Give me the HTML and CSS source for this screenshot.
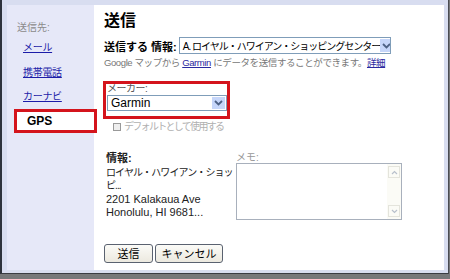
FILE: index.html
```html
<!DOCTYPE html>
<html lang="ja">
<head>
    <meta charset="UTF-8">
    <title>送信</title>
    <link rel="stylesheet" href="styles.css">
</head>
<body>
    <div class="frame">
        <div class="dialog">
            <div class="side">
                <div class="side-label">送信先:</div>
                <a class="side-link" href="#">メール</a>
                <a class="side-link" href="#">携帯電話</a>
                <a class="side-link" href="#">カーナビ</a>
                <div class="side-sel">GPS</div>
            </div>
            <div class="main">
                <h1>送信</h1>
                <div class="info-line">
                    <span class="strong">送信する 情報:</span>
                    <div class="dropdown wide">
                        <span class="jp">A. ロイヤル・ハワイアン・ショッピングセンター</span>
                        <span class="arrow"><svg width="9" height="6" viewBox="0 0 9 6"><path d="M1 1 L4.5 4.5 L8 1" fill="none" stroke="#4d6185" stroke-width="1.8"/></svg></span>
                    </div>
                </div>
                <p class="hint">Google マップから <a href="#">Garmin</a> にデータを送信することができます。<a href="#">詳細</a></p>

                <div class="maker">
                    <div class="maker-label">メーカー:</div>
                    <div class="dropdown maker-select">
                        <span>Garmin</span>
                        <span class="arrow"><svg width="9" height="6" viewBox="0 0 9 6"><path d="M1 1 L4.5 4.5 L8 1" fill="none" stroke="#4d6185" stroke-width="1.8"/></svg></span>
                    </div>
                </div>
                <div class="check"><span class="box"></span>デフォルトとして使用する</div>

                <div class="details">
                    <div class="info">
                        <div class="strong">情報:</div>
                        <div class="jp">ロイヤル・ハワイアン・ショッ</div>
                        <div class="jp">ピ...</div>
                        <div>2201 Kalakaua Ave</div>
                        <div>Honolulu, HI 9681...</div>
                    </div>
                    <div class="memo">
                        <div class="memo-label">メモ:</div>
                        <div class="memo-box">
                            <div class="scroll">
                                <span class="sbtn"><svg width="7" height="5" viewBox="0 0 7 5"><path d="M1 4 L3.5 1.5 L6 4" fill="none" stroke="#b8c0cc" stroke-width="1.2"/></svg></span>
                                <span class="sbtn"><svg width="7" height="5" viewBox="0 0 7 5"><path d="M1 1 L3.5 3.5 L6 1" fill="none" stroke="#b8c0cc" stroke-width="1.2"/></svg></span>
                            </div>
                        </div>
                    </div>
                </div>

                <div class="buttons">
                    <button>送信</button>
                    <button class="cancel">キャンセル</button>
                </div>
            </div>
        </div>
    </div>
</body>
</html>
```

FILE: styles.css
```css
body {
    margin: 0;
    background-color: #77787a;
    font-family: 'Liberation Sans', 'Noto Sans CJK JP', sans-serif;
    color: #000;
    width: 450px;
    height: 279px;
    overflow: hidden;
}
.frame {
    width: 437px;
    height: 265px;
    background-color: #d8ddf0;
    border-left: 2px solid #2e323c;
    border-right: 1px solid #4a4c52;
    border-bottom: 1px solid #3a3c42;
    padding: 5px 4px 3px 5px;
}
.dialog {
    display: flex;
    height: 100%;
}
.side {
    width: 87px;
    background-color: #e6e8f8;
    padding-top: 16px;
    display: flex;
    flex-direction: column;
    align-items: flex-start;
}
.side-label {
    font-size: 10px;
    color: #8a8a8a;
    margin-left: 10px;
    margin-bottom: 6px;
    line-height: 14px;
}
.side-link {
    font-size: 10px;
    color: #1c1ca8;
    margin-left: 16px;
    margin-bottom: 10.5px;
    line-height: 14px;
    letter-spacing: -0.3px;
}
.side-sel {
    position: relative;
    z-index: 1;
    width: 67px;
    height: 18px;
    margin-left: 7px;
    margin-right: -3px;
    margin-top: -6px;
    background-color: #fff;
    border: 3px solid #d4141c;
    font-size: 12px;
    font-weight: bold;
    line-height: 18px;
    padding-left: 10px;
    box-sizing: content-box;
}
.main {
    flex: 1;
    background-color: #fff;
    padding: 4px 0 0 10px;
}
h1 {
    margin: 0 0 4px 0;
    font-size: 16px;
    font-weight: bold;
    line-height: 24px;
}
.strong {
    font-weight: bold;
    font-size: 11px;
}
.jp {
    letter-spacing: -1px;
}
.info-line {
    display: flex;
    align-items: center;
    gap: 2px;
}
.dropdown {
    box-sizing: border-box;
    display: flex;
    align-items: center;
    justify-content: space-between;
    border: 1px solid #7f9db9;
    height: 17px;
    font-size: 11px;
    padding-left: 3px;
    background-color: #fff;
    white-space: nowrap;
    overflow: hidden;
}
.dropdown.wide {
    width: 212px;
    font-size: 10px;
}
.arrow {
    flex: none;
    width: 13px;
    height: 13px;
    margin-right: 1px;
    background-color: #c6d6fa;
    display: flex;
    align-items: center;
    justify-content: center;
}
.hint {
    margin: 2px 0 0 0;
    font-size: 9.5px;
    color: #777;
    line-height: 14px;
    letter-spacing: -0.4px;
    white-space: nowrap;
}
.hint a {
    color: #2a2aa0;
}
.maker {
    margin-top: 11px;
    margin-left: -1px;
    width: 121px;
    border: 3px solid #d4141c;
    padding: 0 0 5px 0;
}
.maker-label {
    font-size: 10px;
    color: #555;
    line-height: 10px;
    margin-left: 1px;
    letter-spacing: -0.5px;
}
.maker-select {
    width: 120px;
    height: 16px;
    font-size: 12px;
    margin: 1px 0 0 1px;
}
.maker-select .arrow {
    height: 12px;
}
.check {
    display: flex;
    align-items: center;
    gap: 3px;
    font-size: 10px;
    letter-spacing: -1.7px;
    color: #b0b0b0;
    margin: 3px 0 0 9px;
    line-height: 10px;
    height: 10px;
}
.check .box {
    width: 6px;
    height: 6px;
    border: 1px solid #999;
    background-color: #eee;
}
.details {
    display: flex;
    margin-top: 20px;
    padding-left: 2px;
    gap: 2px;
}
.info {
    width: 128px;
    font-size: 11px;
    line-height: 13.5px;
    color: #222;
    white-space: nowrap;
}
.info .jp {
    font-size: 10px;
    letter-spacing: -0.9px;
}
.memo-label {
    font-size: 10px;
    color: #999;
    line-height: 11px;
}
.memo-box {
    width: 164px;
    height: 55px;
    border: 1px solid #a8b0bc;
    display: flex;
    justify-content: flex-end;
}
.scroll {
    width: 12px;
    background-color: #fbfbf6;
    display: flex;
    flex-direction: column;
    justify-content: space-between;
    padding: 2px 1px;
}
.sbtn {
    height: 10px;
    border: 1px solid #e4e4dc;
    display: flex;
    align-items: center;
    justify-content: center;
}
.buttons {
    margin-top: 24px;
    display: flex;
    gap: 2px;
}
button {
    font-family: inherit;
    font-size: 11px;
    height: 19px;
    padding: 0;
    width: 49px;
    background: linear-gradient(#fbfbf8, #ece9df);
    border: 1px solid #5a6270;
    border-radius: 3px;
    line-height: 16px;
}
button.cancel {
    width: 68px;
}
```
